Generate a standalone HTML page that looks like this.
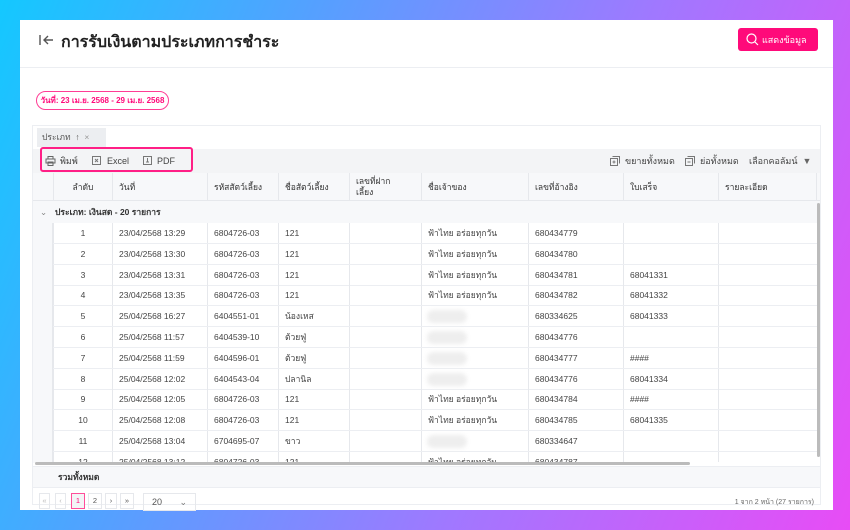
<!DOCTYPE html>
<html><head><meta charset="utf-8"><style>
*{box-sizing:border-box;margin:0;padding:0}
body{width:850px;height:530px;overflow:hidden;font-family:"Liberation Sans","Noto Sans CJK SC",sans-serif;background:linear-gradient(112deg,#14c8ff 0%,#55a0ff 30%,#a078ff 62%,#e84cf6 100%);position:relative;color:#333}
.panel{position:absolute;left:20px;top:20px;width:813px;height:490px;background:#fff}
.hdr{position:absolute;left:0;top:0;width:813px;height:48px;border-bottom:1px solid #eceef2}
.title{position:absolute;left:41px;top:10px;font-size:16px;font-weight:bold;color:#222}
.back{position:absolute;left:19px;top:14px}
.btn{position:absolute;left:718px;top:8px;width:80px;height:23px;background:#ff0a7a;border-radius:3px;color:#fff;font-size:9px;padding:5px 0 0 24px}
.btn svg{position:absolute;left:8px;top:5px}
.chip{position:absolute;left:16px;top:71px;width:133px;height:19px;border:1px solid #ff3d95;border-radius:10px;color:#ff0a7a;font-size:8px;font-weight:bold;text-align:center;line-height:17px}
.tbl{position:absolute;left:12px;top:105px;width:789px;height:380px;border:1px solid #eceef2}
.grp{position:absolute;left:4px;top:2px;width:69px;height:19px;background:#eceef1;font-size:8.5px;color:#555;padding:0 0 0 5px;line-height:19px}
.tb{position:absolute;left:0;top:23px;width:787px;height:24px;background:#f3f4f6;font-size:9px;color:#444}
.tb span{position:absolute;top:0;line-height:24px}
.pink{position:absolute;left:7px;top:21px;width:153px;height:25px;border:2px solid #ff1f86;border-radius:3px}
.th{position:absolute;top:47px;left:0;width:787px;height:28px;background:#f7f8fa;border-bottom:1px solid #e6e8ec;font-size:8.5px;color:#333}
.th div,.row div{position:absolute;top:0;height:100%;border-left:1px solid #e6e8ec}
.th div{padding:0 0 0 6px;line-height:28px}
.g{position:absolute;top:75px;left:0;width:787px;height:22px;background:#f7f8fa;font-size:8.5px;font-weight:bold;padding:0 0 0 22px;line-height:22px;color:#333}
.row{position:absolute;left:20px;width:764px;height:21px;border-bottom:1px solid #eceef2;font-size:8.5px;color:#444}
.row div{padding:0 0 0 6px;line-height:20px;white-space:nowrap}
.blur{position:absolute;left:5px;top:4px;width:40px;height:13px;background:#eee;border-radius:7px;filter:blur(2px)}
.foot{position:absolute;left:0;top:340px;width:787px;height:22px;background:#f7f8fa;border-top:1px solid #eceef2;border-bottom:1px solid #eceef2;font-size:8.5px;font-weight:bold;padding:0 0 0 25px;line-height:20px}
.pg{position:absolute;top:367px;font-size:7.5px;color:#555;height:16px;border:1px solid #e6e8ec;text-align:center;line-height:14px}
</style></head><body>
<div class="panel">
 <div class="hdr">
  <svg class="back" width="16" height="12" viewBox="0 0 16 12"><path d="M1 1v10M14 6H5M9 2L5 6l4 4" stroke="#555" stroke-width="1.4" fill="none"/></svg>
  <div class="title">การรับเงินตามประเภทการชำระ</div>
  <div class="btn"><svg width="13" height="13" viewBox="0 0 13 13"><circle cx="5.5" cy="5.5" r="4.5" stroke="#fff" stroke-width="1.2" fill="none"/><path d="M9 9l3 3" stroke="#fff" stroke-width="1.2"/></svg>แสดงข้อมูล</div>
 </div>
 <div class="chip">วันที่: 23 เม.ย. 2568 - 29 เม.ย. 2568</div>
 <div class="tbl">
  <div class="grp">ประเภท &nbsp;↑ &nbsp;<span style="color:#999">×</span></div>
  <div class="tb">
   <svg style="position:absolute;left:12px;top:7px" width="11" height="10" viewBox="0 0 11 10"><rect x="1" y="3" width="9" height="4" fill="none" stroke="#666"/><rect x="3" y="0.5" width="5" height="2.5" fill="none" stroke="#666"/><rect x="3" y="6" width="5" height="3.5" fill="none" stroke="#666"/></svg>
   <span style="left:27px">พิมพ์</span>
   <svg style="position:absolute;left:59px;top:7px" width="9" height="9"><rect x=".5" y=".5" width="8" height="8" fill="none" stroke="#777"/><path d="M3 3l3 3M6 3L3 6" stroke="#777"/></svg>
   <span style="left:74px">Excel</span>
   <svg style="position:absolute;left:110px;top:7px" width="9" height="9"><rect x=".5" y=".5" width="8" height="8" fill="none" stroke="#777"/><path d="M4.5 2v4M3 6h3" stroke="#777"/></svg>
   <span style="left:124px">PDF</span>
   <svg style="position:absolute;left:577px;top:7px" width="10" height="10"><rect x=".5" y="2.5" width="7" height="7" fill="none" stroke="#777"/><path d="M2.5 .5h7v7" fill="none" stroke="#777"/><path d="M4 4.5v3M2.5 6h3" stroke="#777"/></svg>
   <span style="left:592px">ขยายทั้งหมด</span>
   <svg style="position:absolute;left:652px;top:7px" width="10" height="10"><rect x=".5" y="2.5" width="7" height="7" fill="none" stroke="#777"/><path d="M2.5 .5h7v7" fill="none" stroke="#777"/><path d="M2.5 6h3" stroke="#777"/></svg>
   <span style="left:667px">ย่อทั้งหมด</span>
   <span style="left:716px">เลือกคอลัมน์ &nbsp;<span style="position:static;color:#666">▼</span></span>
  </div>
  <div class="pink"></div>
  <div class="th">
   <div style="left:20px;width:59px;text-align:center;padding-left:0">ลำดับ</div>
   <div style="left:79px;width:95px">วันที่</div>
   <div style="left:174px;width:71px">รหัสสัตว์เลี้ยง</div>
   <div style="left:245px;width:71px">ชื่อสัตว์เลี้ยง</div>
   <div style="left:316px;width:72px;padding-top:3px;line-height:11px">เลขที่ฝาก<br>เลี้ยง</div>
   <div style="left:388px;width:107px">ชื่อเจ้าของ</div>
   <div style="left:495px;width:95px">เลขที่อ้างอิง</div>
   <div style="left:590px;width:95px">ใบเสร็จ</div>
   <div style="left:685px;width:98px">รายละเอียด</div>
   <div style="left:783px;width:4px"></div>
  </div>
  <div class="g"><span style="position:absolute;left:7px;top:0;color:#888;font-weight:normal">⌄</span>ประเภท: เงินสด - 20 รายการ</div>
  <div style="position:absolute;left:0;top:97px;width:20px;height:240px;background:#f7f8fa;border-right:1px solid #e6e8ec"></div>
  <div id="rows"></div>
  <div style="position:absolute;left:784px;top:77px;width:3px;height:254px;background:#bbb;border-radius:2px"></div>
  <div style="position:absolute;left:2px;top:336px;width:655px;height:3px;background:#bbb;border-radius:2px"></div>
  <div class="foot">รวมทั้งหมด</div>
  <div class="pg" style="left:6px;width:11px;color:#bbb">«</div>
  <div class="pg" style="left:22px;width:11px;color:#bbb">‹</div>
  <div class="pg" style="left:38px;width:14px;background:#f3f4f6;border-color:#ff4d9a;color:#ff0a7a">1</div>
  <div class="pg" style="left:55px;width:14px">2</div>
  <div class="pg" style="left:72px;width:12px">›</div>
  <div class="pg" style="left:87px;width:14px">»</div>
  <div class="pg" style="left:110px;width:53px;height:18px;text-align:left;padding-left:8px;font-size:9px;line-height:16px">20<span style="position:absolute;right:8px;color:#777">⌄</span></div>
  <div style="position:absolute;right:6px;top:371px;font-size:7px;color:#666">1 จาก 2 หน้า (27 รายการ)</div>
 </div>
</div>
<script>
var d=[["1","23/04/2568 13:29","6804726-03","121","","ฟ้าไทย อร่อยทุกวัน","680434779",""],
["2","23/04/2568 13:30","6804726-03","121","","ฟ้าไทย อร่อยทุกวัน","680434780",""],
["3","23/04/2568 13:31","6804726-03","121","","ฟ้าไทย อร่อยทุกวัน","680434781","68041331"],
["4","23/04/2568 13:35","6804726-03","121","","ฟ้าไทย อร่อยทุกวัน","680434782","68041332"],
["5","25/04/2568 16:27","6404551-01","น้องเหส","","*","680334625","68041333"],
["6","25/04/2568 11:57","6404539-10","ต้วยฟู่","","*","680434776",""],
["7","25/04/2568 11:59","6404596-01","ต้วยฟู่","","*","680434777","####"],
["8","25/04/2568 12:02","6404543-04","ปลานิล","","*","680434776","68041334"],
["9","25/04/2568 12:05","6804726-03","121","","ฟ้าไทย อร่อยทุกวัน","680434784","####"],
["10","25/04/2568 12:08","6804726-03","121","","ฟ้าไทย อร่อยทุกวัน","680434785","68041335"],
["11","25/04/2568 13:04","6704695-07","ขาว","","*","680334647",""],
["12","25/04/2568 13:12","6804726-03","121","","ฟ้าไทย อร่อยทุกวัน","680434787",""]];
var L=[0,59,154,225,296,368,475,570,665],W=[59,95,71,71,72,107,95,95,99],h="";
d.forEach(function(r,i){if(i==11){h+='<div style="position:absolute;left:0;top:'+(97+i*20.8)+'px;width:787px;height:'+(336-97-i*20.8)+'px;overflow:hidden">';}
h+='<div class="row" style="top:'+(i==11?0:97+i*20.8)+'px">';
for(var c=0;c<9;c++){var t=c<8?r[c]:"";h+='<div style="left:'+L[c]+'px;width:'+W[c]+'px;'+(c==0?'text-align:center;padding-left:0':'')+'">'+(t=="*"?'<span class="blur"></span>':t)+'</div>';}
h+='</div>';if(i==11)h+='</div>';});
document.getElementById("rows").innerHTML=h;
</script>
</body></html>
